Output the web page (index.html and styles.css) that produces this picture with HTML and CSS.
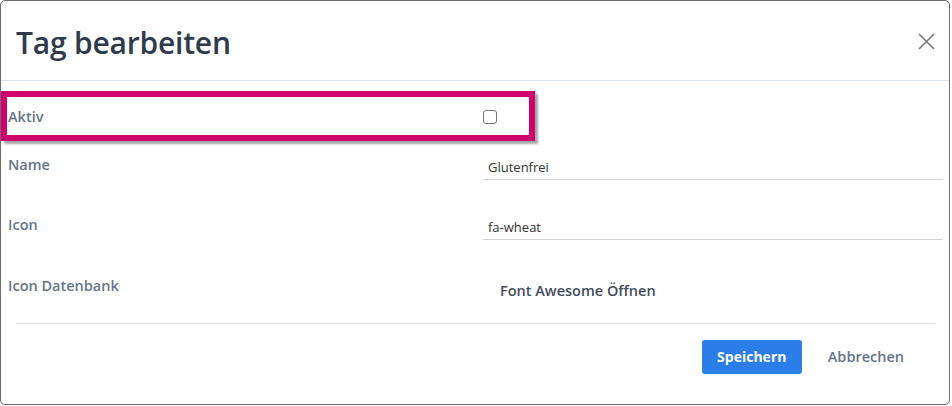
FILE: index.html
```html
<!DOCTYPE html>
<html lang="de">
<head>
<meta charset="utf-8">
<title>Tag bearbeiten</title>
<link rel="stylesheet" href="styles.css">
</head>
<body>
<div class="dialog">
  <header class="dlg-header">
    <h1 class="dlg-title">Tag bearbeiten</h1>
    <button class="close-btn" aria-label="Schließen">
      <svg width="17" height="17" viewBox="0 0 17 17"><path d="M1 1 L16 16 M16 1 L1 16" stroke="#7b7b7b" stroke-width="1.6" fill="none"/></svg>
    </button>
  </header>
  <div class="dlg-body">
    <div class="row row-aktiv">
      <label class="lbl">Aktiv</label>
      <div class="ctl"><span class="checkbox"></span></div>
    </div>
    <div class="row row-name">
      <label class="lbl">Name</label>
      <div class="ctl"><div class="input">Glutenfrei</div></div>
    </div>
    <div class="row row-icon">
      <label class="lbl">Icon</label>
      <div class="ctl"><div class="input">fa-wheat</div></div>
    </div>
    <div class="row row-db">
      <label class="lbl">Icon Datenbank</label>
      <div class="ctl"><button class="link-btn">Font Awesome Öffnen</button></div>
    </div>
  </div>
  <footer class="dlg-footer">
    <button class="btn-primary">Speichern</button>
    <button class="btn-plain">Abbrechen</button>
  </footer>
  <div class="highlight"></div>
</div>
</body>
</html>
```
FILE: styles.css
```css
* { box-sizing: border-box; }
html, body { margin: 0; padding: 0; background: #ffffff; }
body {
  width: 952px;
  height: 406px;
  font-family: "Open Sans", "Noto Sans", sans-serif;
}
.dialog {
  position: relative;
  width: 950px;
  height: 405px;
  border: 1px solid #6b6b6b;
  border-radius: 5px;
  background: #fff;
  display: flex;
  flex-direction: column;
}
.dlg-header {
  height: 80px;
  border-bottom: 1px solid #dbe5ef;
  display: flex;
  align-items: center;
  justify-content: space-between;
  padding: 0 14px 0 15px;
  flex-shrink: 0;
}
.dlg-title {
  margin: 0;
  font-size: 30px;
  font-weight: 600;
  color: #2f3b4d;
  letter-spacing: -0.2px;
  padding-top: 4px;
}
.close-btn {
  border: 0;
  background: none;
  padding: 0;
  width: 17px;
  height: 17px;
  display: flex;
  margin-top: 1px;
}
.dlg-body {
  padding: 25px 6px 0 7px;
  flex: 1;
}
.row {
  display: grid;
  grid-template-columns: 475px 1fr;
  align-items: start;
}
.lbl {
  font-size: 14.5px;
  line-height: 20px;
  font-weight: 600;
  color: #66758b;
  padding-top: 1px;
}
.row-aktiv { height: 20px; }
.row-name { margin-top: 28px; }
.row-icon { margin-top: 34px; }
.row-db { margin-top: 35px; }
.ctl { display: flex; align-items: center; }
.row-aktiv .ctl { height: 20px; }
.checkbox {
  width: 14px;
  height: 14px;
  border: 1px solid #767676;
  border-radius: 3px;
  background: #fff;
  margin-top: 1px;
}
.input {
  width: 100%;
  height: 26px;
  border-bottom: 1px solid #d4d4d4;
  font-size: 13px;
  line-height: 26px;
  padding-left: 5px;
  color: #333;
}
.link-btn {
  border: 0;
  background: none;
  font-family: inherit;
  font-size: 14.5px;
  font-weight: 600;
  color: #434c5c;
  padding: 6px 17px;
  line-height: 20px;
}
.dlg-footer {
  margin: 0 14px 0 15px;
  border-top: 1px solid #dde4eb;
  padding: 15px 25px 30px 0;
  display: flex;
  justify-content: flex-end;
  align-items: center;
  gap: 10px;
  height: 81px;
}
.btn-primary {
  width: 100px;
  height: 34px;
  background: #2b7de9;
  color: #fff;
  border: 0;
  border-radius: 3px;
  font-family: inherit;
  font-size: 14px;
  font-weight: 700;
}
.btn-plain {
  border: 0;
  background: none;
  font-family: inherit;
  font-size: 14.5px;
  font-weight: 600;
  color: #66758b;
  padding: 0 6px 0 16px;
  height: 34px;
}
.highlight {
  position: absolute;
  left: 0;
  top: 90px;
  width: 534px;
  height: 50px;
  border: 6px solid #cf0070;
  box-shadow: 3px 3px 2px rgba(0,0,0,0.35);
  pointer-events: none;
}
```
